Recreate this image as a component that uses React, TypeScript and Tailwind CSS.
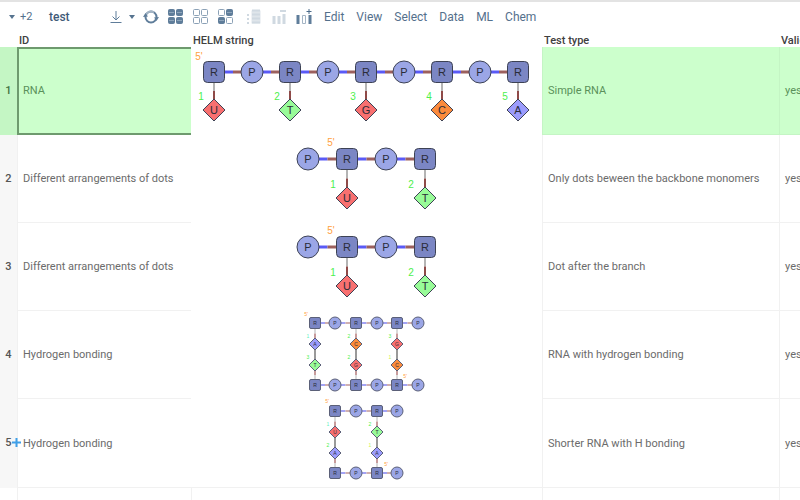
import type { ReactNode } from "react";

type Shape = "R" | "P" | "D";

interface Monomer {
  shape: Shape;
  label: string;
  x: number;
  y: number;
  fill?: string;
}

interface Tag {
  text: string;
  x: number;
  y: number;
  color: string;
}

interface Strand {
  y: number;
  xs: number[];
  shapes: Shape[];
}

interface Structure {
  size: number;
  strands: Strand[];
  bases: Monomer[];
  tags: Tag[];
  paired: boolean;
}

const RED = "#f87070";
const GREEN = "#98fb98";
const ORANGE = "#fb8b3c";
const VIOLET = "#9c9cfc";
const NUM = "#4cf04c";
const END = "#ffa040";

const base = (label: string, x: number, y: number, fill: string): Monomer => ({
  shape: "D",
  label,
  x,
  y,
  fill,
});

const simple: Structure = {
  size: 11,
  paired: false,
  strands: [
    {
      y: 25,
      xs: [23, 61, 99, 137, 175, 213, 251, 289, 327],
      shapes: ["R", "P", "R", "P", "R", "P", "R", "P", "R"],
    },
  ],
  bases: [
    base("U", 23, 63, RED),
    base("T", 99, 63, GREEN),
    base("G", 175, 63, RED),
    base("C", 251, 63, ORANGE),
    base("A", 327, 63, VIOLET),
  ],
  tags: [
    { text: "5'", x: 8, y: 13, color: END },
    { text: "1", x: 10, y: 53, color: NUM },
    { text: "2", x: 86, y: 53, color: NUM },
    { text: "3", x: 162, y: 53, color: NUM },
    { text: "4", x: 238, y: 53, color: NUM },
    { text: "5", x: 314, y: 53, color: NUM },
  ],
};

const dots: Structure = {
  size: 11,
  paired: false,
  strands: [{ y: 24, xs: [117, 156, 195, 234], shapes: ["P", "R", "P", "R"] }],
  bases: [base("U", 156, 63, RED), base("T", 234, 63, GREEN)],
  tags: [
    { text: "5'", x: 140, y: 11, color: END },
    { text: "1", x: 142, y: 53, color: NUM },
    { text: "2", x: 220, y: 53, color: NUM },
  ],
};

const longPair: Structure = {
  size: 6,
  paired: true,
  strands: [
    { y: 12, xs: [124, 144, 165, 186, 206, 227], shapes: ["R", "P", "R", "P", "R", "P"] },
    { y: 74, xs: [124, 144, 165, 186, 206, 227], shapes: ["R", "P", "R", "P", "R", "P"] },
  ],
  bases: [
    base("A", 124, 33, VIOLET),
    base("T", 124, 54, GREEN),
    base("C", 165, 33, ORANGE),
    base("G", 165, 54, RED),
    base("G", 206, 33, RED),
    base("C", 206, 54, ORANGE),
  ],
  tags: [
    { text: "5'", x: 115, y: 5, color: END },
    { text: "1", x: 117, y: 27, color: "#5ff0c0" },
    { text: "3", x: 117, y: 48, color: NUM },
    { text: "2", x: 158, y: 27, color: NUM },
    { text: "2", x: 158, y: 48, color: NUM },
    { text: "3", x: 199, y: 27, color: NUM },
    { text: "1", x: 199, y: 48, color: "#c8f050" },
    { text: "5'", x: 214, y: 67, color: END },
  ],
};

const shortPair: Structure = {
  size: 6,
  paired: true,
  strands: [
    { y: 12, xs: [144, 165, 186, 206], shapes: ["R", "P", "R", "P"] },
    { y: 74, xs: [144, 165, 186, 206], shapes: ["R", "P", "R", "P"] },
  ],
  bases: [
    base("U", 144, 33, RED),
    base("A", 144, 54, VIOLET),
    base("T", 186, 33, GREEN),
    base("A", 186, 54, VIOLET),
  ],
  tags: [
    { text: "5'", x: 136, y: 4, color: END },
    { text: "1", x: 137, y: 27, color: "#5ff0c0" },
    { text: "2", x: 137, y: 48, color: NUM },
    { text: "2", x: 179, y: 27, color: NUM },
    { text: "1", x: 179, y: 48, color: "#c8f050" },
    { text: "5'", x: 195, y: 67, color: END },
  ],
};

function Node({ shape, label, x, y, fill, size }: Monomer & { size: number }) {
  const s = size;
  const stroke = size > 8 ? "#3d4254" : "#5b6078";
  return (
    <g stroke={stroke} strokeWidth="1">
      {shape === "R" && (
        <rect
          x={x - s + 0.5}
          y={y - s + 0.5}
          width={s * 2 - 1}
          height={s * 2 - 1}
          rx={s > 8 ? 4 : 1.5}
          fill="#7b86c4"
        />
      )}
      {shape === "P" && <circle cx={x} cy={y} r={s} fill="#9ba6e6" />}
      {shape === "D" && (
        <path
          d={`M${x} ${y - s}L${x + s} ${y}L${x} ${y + s}L${x - s} ${y}Z`}
          fill={fill}
        />
      )}
      <text
        x={x}
        y={y + (s > 8 ? 4 : 2)}
        textAnchor="middle"
        stroke="none"
        fill="#2a2c38"
        className={s > 8 ? "text-[11px]" : "text-[5px]"}
      >
        {label}
      </text>
    </g>
  );
}

function HelmDrawing({ data, name }: { data: Structure; name: string }) {
  const s = data.size;
  const small = s < 8;
  const width = small ? 2 : 3;
  return (
    <svg
      viewBox="0 0 351 88"
      width="351"
      height="88"
      role="img"
      aria-label={name}
      className="block font-['Liberation_Sans',Arial,sans-serif]"
    >
      {data.strands.map((strand) =>
        strand.xs.slice(1).map((x, i) => {
          const from = strand.xs[i] + s;
          const to = x - s;
          const mid = (from + to) / 2;
          return (
            <g key={`${strand.y}-${x}`} strokeWidth={width}>
              <path d={`M${from} ${strand.y}H${mid}`} stroke={small ? "#a3a3f4" : "#5a5af6"} />
              <path d={`M${mid} ${strand.y}H${to}`} stroke={small ? "#d0b0b0" : "#9c605e"} />
            </g>
          );
        }),
      )}
      {data.bases.map((b) => {
        const below = b.y < 50 || !data.paired;
        const strandY = below ? data.strands[0].y + s : data.strands[1].y - s;
        const edge = below ? b.y - s : b.y + s;
        const mid = (strandY + edge) / 2;
        return (
          <g key={`${b.x}-${b.y}`}>
            <path d={`M${b.x} ${strandY}V${mid}`} stroke="#b4b4b4" strokeWidth={small ? 1 : 2} />
            <path
              d={`M${b.x} ${mid}V${edge}`}
              stroke={small ? "#c89c9c" : "#8f4a48"}
              strokeWidth="2"
            />
            {data.paired && below && (
              <path d={`M${b.x} ${b.y + s}V${b.y + 21 - s}`} stroke="#9a9a9a" strokeWidth="2" />
            )}
          </g>
        );
      })}
      {data.strands.map((strand) =>
        strand.xs.map((x, i) => (
          <Node
            key={`${strand.y}-${x}`}
            shape={strand.shapes[i]}
            label={strand.shapes[i]}
            x={x}
            y={strand.y}
            size={s}
          />
        )),
      )}
      {data.bases.map((b) => (
        <Node key={`${b.x}-${b.y}`} {...b} size={s} />
      ))}
      {data.tags.map((t) => (
        <text
          key={`${t.x}-${t.y}`}
          x={t.x}
          y={t.y}
          textAnchor="middle"
          fill={t.color}
          className={small ? "text-[5px]" : "text-[10px]"}
        >
          {t.text}
        </text>
      ))}
    </svg>
  );
}

const rows = [
  { id: "RNA", helm: simple, test: "Simple RNA" },
  { id: "Different arrangements of dots", helm: dots, test: "Only dots beween the backbone monomers" },
  { id: "Different arrangements of dots", helm: dots, test: "Dot after the branch" },
  { id: "Hydrogen bonding", helm: longPair, test: "RNA with hydrogen bonding" },
  { id: "Hydrogen bonding", helm: shortPair, test: "Shorter RNA with H bonding" },
];

function Tool({ label, children, faded }: { label: string; children: ReactNode; faded?: boolean }) {
  return (
    <button type="button" aria-label={label} className={faded ? "text-[#d0d9e1]" : "text-[#5f7d9a]"}>
      <svg width="16" height="16" viewBox="0 0 16 16" className="block" fill="none" stroke="currentColor">
        {children}
      </svg>
    </button>
  );
}

function Tiles({ filled }: { filled: boolean[] }) {
  const spots = [
    [0, 0],
    [8, 0],
    [0, 8],
    [8, 8],
  ];
  return (
    <>
      {spots.map(([x, y], i) => (
        <g key={i}>
          <rect
            x={x + 0.5}
            y={y + 0.5}
            width="6"
            height="6"
            rx="1"
            fill={filled[i] ? "currentColor" : "none"}
            stroke={filled[i] ? "#5f7d9a" : "#8ba1b6"}
          />
          {filled[i] && <path d={`M${x + 1} ${y + 3.5}h5`} stroke="#8ea5ba" />}
        </g>
      ))}
    </>
  );
}

function Caret() {
  return (
    <svg width="6" height="4" viewBox="0 0 6 4" className="block">
      <path d="M0 0h6L3 4z" fill="#56738f" />
    </svg>
  );
}

function Toolbar() {
  return (
    <div className="flex h-8 items-center overflow-hidden border-t-2 border-[#e3e3e3] pl-[9px] text-xs whitespace-nowrap text-[#54708c]">
      <button type="button" className="flex w-10 items-center gap-[5px] text-[11px]">
        <Caret />
        +2
      </button>
      <span className="w-[60px] font-medium text-[#3f5a78]">test</span>
      <button type="button" aria-label="Download" className="flex w-[34px] items-center gap-1">
        <svg width="16" height="16" viewBox="0 0 16 16" fill="none" stroke="#5f7d9a">
          <path d="M7 2v9M3.500 7.500L7 11l3.500-3.500M1.500 13.500h11" />
        </svg>
        <Caret />
      </button>
      <div className="flex items-center gap-[9px]">
        <Tool label="Refresh">
          <circle cx="8" cy="8" r="5.500" strokeWidth="2" />
          <path d="M2.500 7A5.500 5.500 0 0 1 11 3.400" stroke="#a4b5c5" strokeWidth="2" />
          <path d="M11 8.500l5-.5-2.500 4zM5 7.500L0 8l2.500-4z" fill="currentColor" stroke="none" />
        </Tool>
        <Tool label="Select all">
          <Tiles filled={[true, true, true, true]} />
        </Tool>
        <Tool label="Deselect">
          <Tiles filled={[false, false, false, false]} />
        </Tool>
        <Tool label="Invert selection">
          <Tiles filled={[false, true, true, false]} />
        </Tool>
      </div>
      <div className="ml-[12px] flex items-center gap-[9px]">
        <Tool label="Add rows" faded>
          <path d="M2 5v2M2 9v2M2 13v2" strokeWidth="2" />
          <path d="M5.500 1.500h9v13h-9z" fill="#dfe5ea" stroke="none" />
          <path d="M6 1.500h8M6 5.500h8M6 9.500h8M6 13.500h8" strokeWidth="2" />
        </Tool>
        <Tool label="Remove columns" faded>
          <path d="M3 7v8M8 7v8M13 5v10" strokeWidth="3" />
          <path d="M9 2h6" strokeWidth="2" />
        </Tool>
        <Tool label="Add column">
          <path d="M2 6v9M14 6v9" strokeWidth="3" />
          <path d="M6.500 6.500h3v8h-3z" stroke="#a4b5c5" />
          <path d="M13 0v5M10.500 2.500h5" stroke="#4b6a89" />
        </Tool>
      </div>
      <nav className="flex items-center gap-3 pl-3">
        <button type="button">Edit</button>
        <button type="button">View</button>
        <button type="button">Select</button>
        <button type="button">Data</button>
        <button type="button">ML</button>
        <button type="button">Chem</button>
      </nav>
    </div>
  );
}

function Grid() {
  return (
    <table className="w-full table-fixed border-separate border-spacing-0 text-left text-[11px] whitespace-nowrap">
      <colgroup>
        <col className="w-[17px]" />
        <col className="w-[174px]" />
        <col className="w-[351px]" />
        <col className="w-[237px]" />
        <col />
      </colgroup>
      <thead className="leading-[13px] text-[#404040]">
        <tr>
          <td className="p-0" />
          <th scope="col" className="px-[2px] pt-[2px] pb-0 font-medium">ID</th>
          <th scope="col" className="px-[2px] pt-[2px] pb-0 font-medium">HELM string</th>
          <th scope="col" className="px-[2px] pt-[2px] pb-0 font-medium">Test type</th>
          <th scope="col" className="overflow-hidden pt-[2px] pr-0 pb-0 pl-[2px] font-medium">Valid</th>
        </tr>
      </thead>
      <tbody className="text-[#6b6b6b]">
        {rows.map((row, i) => {
          const current = i === 0;
          const last = i === rows.length - 1;
          const cell = current
            ? "border-l border-b border-[#c4f5c4] bg-[#ccffcc] text-[#5a915a]"
            : "border-l border-b border-[#f1f1f1]";
          return (
            <tr key={i} className="h-[88px]">
              <th
                scope="row"
                className={
                  current
                    ? "bg-[#c4f6c4] p-0 text-center font-medium text-[#3f703f]"
                    : "bg-[#f7f7f7] p-0 text-center font-medium text-[#555555]"
                }
              >
                <span className="relative">
                  {i + 1}
                  {last && (
                    <svg
                      width="9"
                      height="9"
                      viewBox="0 0 9 9"
                      className="absolute top-[2px] left-full"
                      stroke="#3f9fe8"
                      strokeWidth="2"
                      aria-hidden="true"
                    >
                      <path d="M0 4.500h9M4.500 0v9" />
                    </svg>
                  )}
                </span>
              </th>
              <td
                className={
                  current
                    ? "border-y-2 border-l-2 border-[#6e9a6e] bg-[#ccffcc] p-0 pl-1 text-[#5a915a]"
                    : "border-b border-l border-[#f1f1f1] p-0 pt-[2px] pl-[5px]"
                }
              >
                {row.id}
              </td>
              <td className={last ? "border-b border-[#f1f1f1] p-0" : "p-0"}>
                <HelmDrawing data={row.helm} name={row.test} />
              </td>
              <td className={`${cell} p-0 pt-[2px] pl-[5px]`}>{row.test}</td>
              <td className={`${cell} overflow-hidden p-0 pt-[2px] pl-[5px]`}>yes</td>
            </tr>
          );
        })}
        <tr className="h-3">
          <td className="p-0" />
          <td className="border-l border-[#f1f1f1] p-0" />
          <td className="border-l border-[#f1f1f1] p-0" />
          <td className="border-l border-[#f1f1f1] p-0" />
          <td className="border-l border-[#f1f1f1] p-0" />
        </tr>
      </tbody>
    </table>
  );
}

export default function App() {
  return (
    <main className="h-screen overflow-hidden bg-white font-[Roboto,'Liberation_Sans',sans-serif]">
      <Toolbar />
      <Grid />
    </main>
  );
}
